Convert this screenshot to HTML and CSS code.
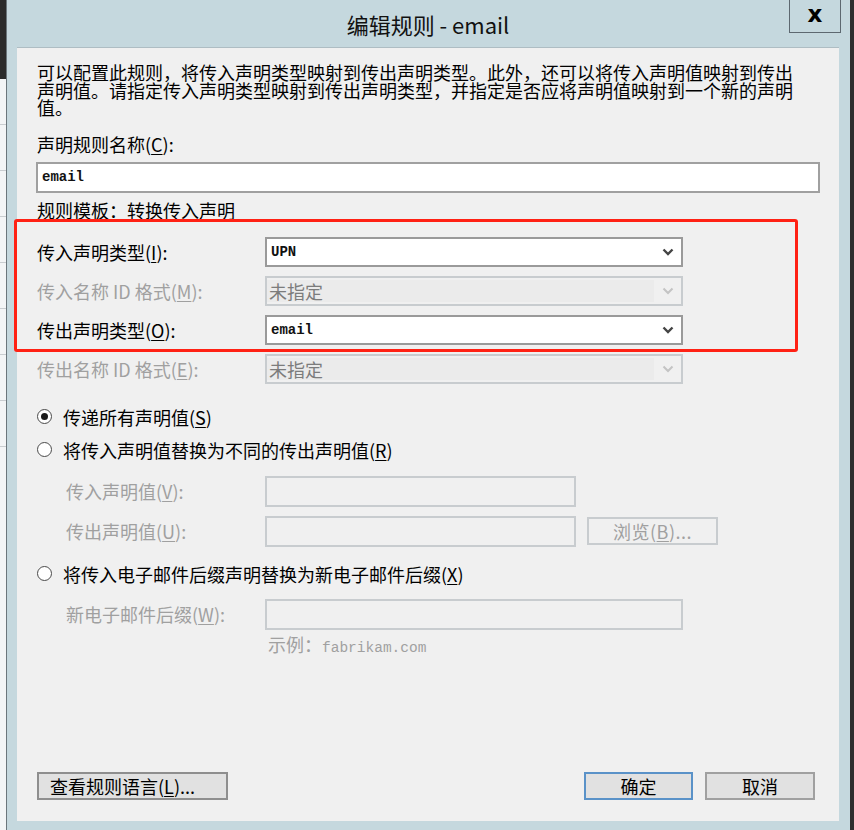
FILE: index.html
```html
<!DOCTYPE html>
<html lang="zh-CN">
<head>
<meta charset="utf-8">
<title>编辑规则 - email</title>
<link rel="stylesheet" href="styles.css">
</head>
<body>
<div class="bg-left">
  <div class="bg-dark"></div>
  <div class="bg-list">
    <div class="bg-row"></div><div class="bg-row"></div><div class="bg-row"></div>
    <div class="bg-row"></div><div class="bg-row"></div><div class="bg-row"></div>
    <div class="bg-row"></div><div class="bg-row"></div>
  </div>
</div>
<div class="dialog">
  <div class="titlebar">
    <div class="title">编辑规则 - email</div>
    <div class="close">x</div>
  </div>
  <div class="panel">
    <p class="desc">可以配置此规则，将传入声明类型映射到传出声明类型。此外，还可以将传入声明值映射到传出<br>声明值。请指定传入声明类型映射到传出声明类型，并指定是否应将声明值映射到一个新的声明<br>值。</p>
    <div class="lbl name-lbl">声明规则名称(<u>C</u>):</div>
    <div class="textbox name-box"><span class="mono">email</span></div>
    <div class="lbl tpl-lbl">规则模板：转换传入声明</div>

    <div class="rows">
      <div class="row">
        <div class="lbl">传入声明类型(<u>I</u>):</div>
        <div class="combo"><span class="mono">UPN</span><svg class="chev" viewBox="0 0 12 8" width="12" height="8"><polyline points="1.5,1.5 6,6 10.5,1.5" fill="none" stroke="#444" stroke-width="2.4"/></svg></div>
      </div>
      <div class="row">
        <div class="lbl dis">传入名称 ID 格式(<u>M</u>):</div>
        <div class="combo off"><span class="inner">未指定</span><svg class="chev" viewBox="0 0 12 8" width="12" height="8"><polyline points="1.5,1.5 6,6 10.5,1.5" fill="none" stroke="#c4c4c4" stroke-width="2"/></svg></div>
      </div>
      <div class="row">
        <div class="lbl">传出声明类型(<u>O</u>):</div>
        <div class="combo"><span class="mono">email</span><svg class="chev" viewBox="0 0 12 8" width="12" height="8"><polyline points="1.5,1.5 6,6 10.5,1.5" fill="none" stroke="#444" stroke-width="2.4"/></svg></div>
      </div>
      <div class="row">
        <div class="lbl dis">传出名称 ID 格式(<u>E</u>):</div>
        <div class="combo off"><span class="inner">未指定</span><svg class="chev" viewBox="0 0 12 8" width="12" height="8"><polyline points="1.5,1.5 6,6 10.5,1.5" fill="none" stroke="#c4c4c4" stroke-width="2"/></svg></div>
      </div>
    </div>

    <div class="radio r1"><span class="dot on"></span><span>传递所有声明值(<u>S</u>)</span></div>
    <div class="radio r2"><span class="dot"></span><span>将传入声明值替换为不同的传出声明值(<u>R</u>)</span></div>

    <div class="row ind v-row">
      <div class="lbl dis">传入声明值(<u>V</u>):</div>
      <div class="textbox off short"></div>
    </div>
    <div class="row ind u-row">
      <div class="lbl dis">传出声明值(<u>U</u>):</div>
      <div class="ctrl-pair">
        <div class="textbox off short"></div>
        <div class="btn off browse">浏览(<u>B</u>)...</div>
      </div>
    </div>

    <div class="radio r3"><span class="dot"></span><span>将传入电子邮件后缀声明替换为新电子邮件后缀(<u>X</u>)</span></div>

    <div class="row ind w-row">
      <div class="lbl dis">新电子邮件后缀(<u>W</u>):</div>
      <div class="textbox off long"></div>
    </div>
    <div class="example">示例：<span class="mono-g">fabrikam.com</span></div>

    <div class="footer">
      <div class="btn lang">查看规则语言(<u>L</u>)...</div>
      <div class="spacer"></div>
      <div class="btn ok">确定</div>
      <div class="btn cancel">取消</div>
    </div>

    <div class="annot"></div>
  </div>
</div>
<div class="bg-right"></div>
</body>
</html>
```
FILE: styles.css
```css
html, body {
  margin: 0;
  padding: 0;
}
body {
  display: flex;
  width: 854px;
  height: 830px;
  overflow: hidden;
  background: #2c2c2c;
  font-family: "Noto Sans CJK SC", "Noto Sans", sans-serif;
  color: #000;
}
.bg-left {
  width: 6px;
  display: flex;
  flex-direction: column;
  background: #f3f5f6;
}
.bg-dark {
  height: 79px;
  background: #2b2b2b;
}
.bg-list {
  display: flex;
  flex-direction: column;
}
.bg-row {
  height: 45px;
  border-bottom: 1px solid #c9cdd0;
}
.bg-right {
  width: 4px;
  background: #2e2e2e;
}
.dialog {
  width: 844px;
  box-sizing: border-box;
  border-left: 1px solid #6b767c;
  background: #c5d8de;
  padding: 0 11px 9px 10px;
  display: flex;
  flex-direction: column;
}
.titlebar {
  height: 47px;
  display: grid;
  grid-template-columns: 1fr auto 1fr;
}
.title {
  grid-column: 2;
  font-size: 22px;
  line-height: 47px;
  color: #111;
  padding-top: 1px;
}
.close {
  grid-column: 3;
  justify-self: end;
  margin-right: -2px;
  width: 52px;
  height: 33px;
  box-sizing: border-box;
  border: 1px solid #5d6870;
  border-top: none;
  font-family: "DejaVu Sans", sans-serif;
  font-weight: bold;
  font-size: 23px;
  line-height: 28px;
  text-align: center;
  color: #000;
}
.panel {
  position: relative;
  flex: 1;
  background: #f0f0f0;
  border-top: 1px solid #aebdc3;
  padding: 16px 24px 21px 20px;
  display: flex;
  flex-direction: column;
  align-items: flex-start;
}
.desc {
  margin: 0;
  font-size: 18px;
  line-height: 17.5px;
  white-space: nowrap;
}
.lbl {
  font-size: 18px;
  line-height: 22px;
  white-space: nowrap;
}
.lbl.dis {
  color: #a0a0a0;
}
u {
  text-underline-offset: 2px;
}
.name-lbl {
  margin-top: 16px;
}
.textbox {
  box-sizing: border-box;
  height: 31px;
  background: #fff;
  border: 2px solid #a0a0a0;
  display: flex;
  align-items: center;
  padding-left: 4px;
}
.name-box {
  margin-top: 7px;
  margin-left: -1px;
  width: 784px;
}
.mono {
  font-family: "Liberation Mono", monospace;
  font-weight: bold;
  font-size: 14px;
  color: #111;
}
.tpl-lbl {
  margin-top: 6px;
}
.rows {
  margin-top: 16px;
  display: flex;
  flex-direction: column;
  gap: 9px;
}
.row {
  display: grid;
  grid-template-columns: 228px auto;
  align-items: center;
}
.row.ind .lbl {
  padding-left: 29px;
}
.combo {
  box-sizing: border-box;
  width: 418px;
  height: 30px;
  background: #fff;
  border: 2px solid #9a9a9a;
  display: flex;
  align-items: center;
  padding-left: 4px;
  padding-right: 7px;
}
.combo .chev {
  margin-left: auto;
}
.combo.off {
  background: #f0f0f0;
  border-color: #c8cccf;
  padding: 0 7px 0 0;
}
.combo.off .inner {
  flex: 0 0 385px;
  align-self: stretch;
  margin: 2px 0;
  background: #ebebeb;
  font-size: 18px;
  line-height: 22px;
  color: #7c7c7c;
  padding-left: 2px;
  display: flex;
  align-items: center;
}
.radio {
  display: flex;
  align-items: center;
  font-size: 18px;
  line-height: 24px;
  white-space: nowrap;
}
.dot {
  width: 15px;
  height: 15px;
  box-sizing: border-box;
  border: 1px solid #4a4a4a;
  border-radius: 50%;
  background: #fff;
  margin-right: 11px;
  display: flex;
  align-items: center;
  justify-content: center;
}
.dot.on::after {
  content: "";
  width: 7px;
  height: 7px;
  border-radius: 50%;
  background: #1a1a1a;
}
.r1 { margin-top: 21px; }
.r2 { margin-top: 9px; }
.v-row { margin-top: 14px; }
.u-row { margin-top: 9px; }
.r3 { margin-top: 15px; }
.w-row { margin-top: 13px; }
.textbox.off {
  background: #f0f0f0;
  border-color: #c8cccf;
}
.textbox.short { width: 311px; }
.textbox.long { width: 418px; }
.ctrl-pair {
  display: flex;
  align-items: center;
  gap: 11px;
}
.btn {
  box-sizing: border-box;
  height: 28px;
  background: #e1e1e1;
  border: 2px solid #a6a6a6;
  font-size: 18px;
  line-height: 24px;
  text-align: center;
  white-space: nowrap;
}
.btn.off {
  background: #f0f0f0;
  border-color: #c8cccf;
  color: #a0a0a0;
}
.browse {
  width: 131px;
  letter-spacing: 0.5px;
}
.example {
  margin-top: 4px;
  margin-left: 231px;
  font-size: 18px;
  line-height: 20px;
  color: #a0a0a0;
}
.mono-g {
  font-family: "Liberation Mono", monospace;
  font-size: 14.5px;
}
.footer {
  margin-top: auto;
  align-self: stretch;
  display: flex;
  gap: 12px;
}
.spacer { flex: 1; }
.lang {
  width: 191px;
  text-align: left;
  padding-left: 11px;
  border-color: #8e8e8e;
}
.ok {
  width: 109px;
  border-color: #5a92c8;
}
.cancel {
  width: 110px;
  border-color: #a0a0a0;
}
.annot {
  position: absolute;
  left: -3px;
  top: 171px;
  width: 784px;
  height: 133px;
  box-sizing: border-box;
  border: 3px solid #ff2114;
  border-radius: 3px;
  pointer-events: none;
}
```
